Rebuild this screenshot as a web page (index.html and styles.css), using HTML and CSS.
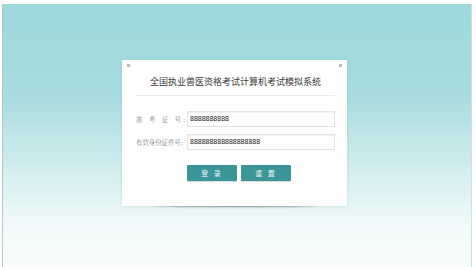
FILE: index.html
```html
<!DOCTYPE html>
<html lang="zh">
<head>
<meta charset="utf-8">
<title>全国执业兽医资格考试计算机考试模拟系统</title>
<link rel="stylesheet" href="styles.css">
</head>
<body>
<div class="screen">
  <div class="card">
    <span class="corner corner-l"></span>
    <span class="corner corner-r"></span>
    <h1 class="title">全国执业兽医资格考试计算机考试模拟系统</h1>
    <div class="sep"></div>
    <div class="form">
      <div class="row">
        <label class="label label-spaced">准 考 证 号:</label>
        <div class="input">8888888888</div>
      </div>
      <div class="row">
        <label class="label">有效身份证件号:</label>
        <div class="input">888888888888888888</div>
      </div>
      <div class="buttons">
        <button class="btn">登 录</button>
        <button class="btn">重 置</button>
      </div>
    </div>
  </div>
</div>
</body>
</html>
```
FILE: styles.css
```css
html, body {
  margin: 0;
  padding: 0;
  background: #ffffff;
  width: 476px;
  height: 267px;
  overflow: hidden;
}
.screen {
  position: relative;
  z-index: 0;
  margin-top: 4px;
  margin-left: 2px;
  width: 470px;
  height: 263px;
  border-left: 1px solid #b9c4c5;
  border-right: 1px solid #d6dddd;
  background: linear-gradient(to bottom, #9dd8dc 0%, #a8dcdf 35%, #d6eff0 65%, #f2fafa 85%, #f8fdfd 100%);
  padding: 56px 0 0 119px;
  box-sizing: border-box;
  font-family: "Noto Sans CJK SC", sans-serif;
}
.card {
  position: relative;
  width: 225px;
  height: 146px;
  background: #fefefe;
  box-sizing: border-box;
  padding: 14px 12px 0 14px;
  box-shadow: 0 0 3px rgba(120, 170, 175, 0.35);
}
.card::after {
  content: "";
  position: absolute;
  left: 30px;
  right: 28px;
  bottom: 1px;
  height: 4px;
  border-radius: 50%;
  box-shadow: 0 2px 2px rgba(60, 80, 80, 0.6);
  z-index: -1;
}
.corner {
  position: absolute;
  top: 4px;
  width: 3px;
  height: 3px;
  background: #b8bcbc;
}
.corner-l { left: 5px; }
.corner-r { right: 5px; }
.title {
  margin: 0;
  font-size: 9px;
  font-weight: normal;
  line-height: 16px;
  color: #3a3a3a;
  text-align: center;
}
.sep {
  height: 1px;
  background: #ececec;
  margin: 5px 0 0 0;
}
.form {
  padding-top: 15px;
  display: flex;
  flex-direction: column;
  gap: 7px;
}
.row {
  display: flex;
  align-items: center;
  height: 16px;
}
.label {
  width: 51px;
  flex: none;
  font-family: "Noto Serif CJK SC", "Noto Sans CJK SC", serif;
  font-size: 6.4px;
  color: #7e7e7e;
  white-space: nowrap;
}
.label-spaced {
  letter-spacing: 2.4px;
}
.input {
  width: 148px;
  height: 16px;
  box-sizing: border-box;
  border: 1px solid #e2e4e4;
  box-shadow: inset 0 1px 1px rgba(0,0,0,0.05);
  font-family: "Liberation Sans", sans-serif;
  font-size: 7px;
  line-height: 14px;
  color: #222;
  padding-left: 2px;
}
.buttons {
  display: flex;
  gap: 4px;
  padding-left: 51px;
  margin-top: 8px;
}
.btn {
  width: 50px;
  height: 16px;
  border: none;
  border-radius: 1px;
  background: #3c9596;
  color: #e9f6f6;
  font-family: "Noto Sans CJK SC", sans-serif;
  font-size: 7px;
  padding: 0;
  letter-spacing: 2px;
  box-shadow: 0 1px 1px rgba(0,0,0,0.15);
}
```
